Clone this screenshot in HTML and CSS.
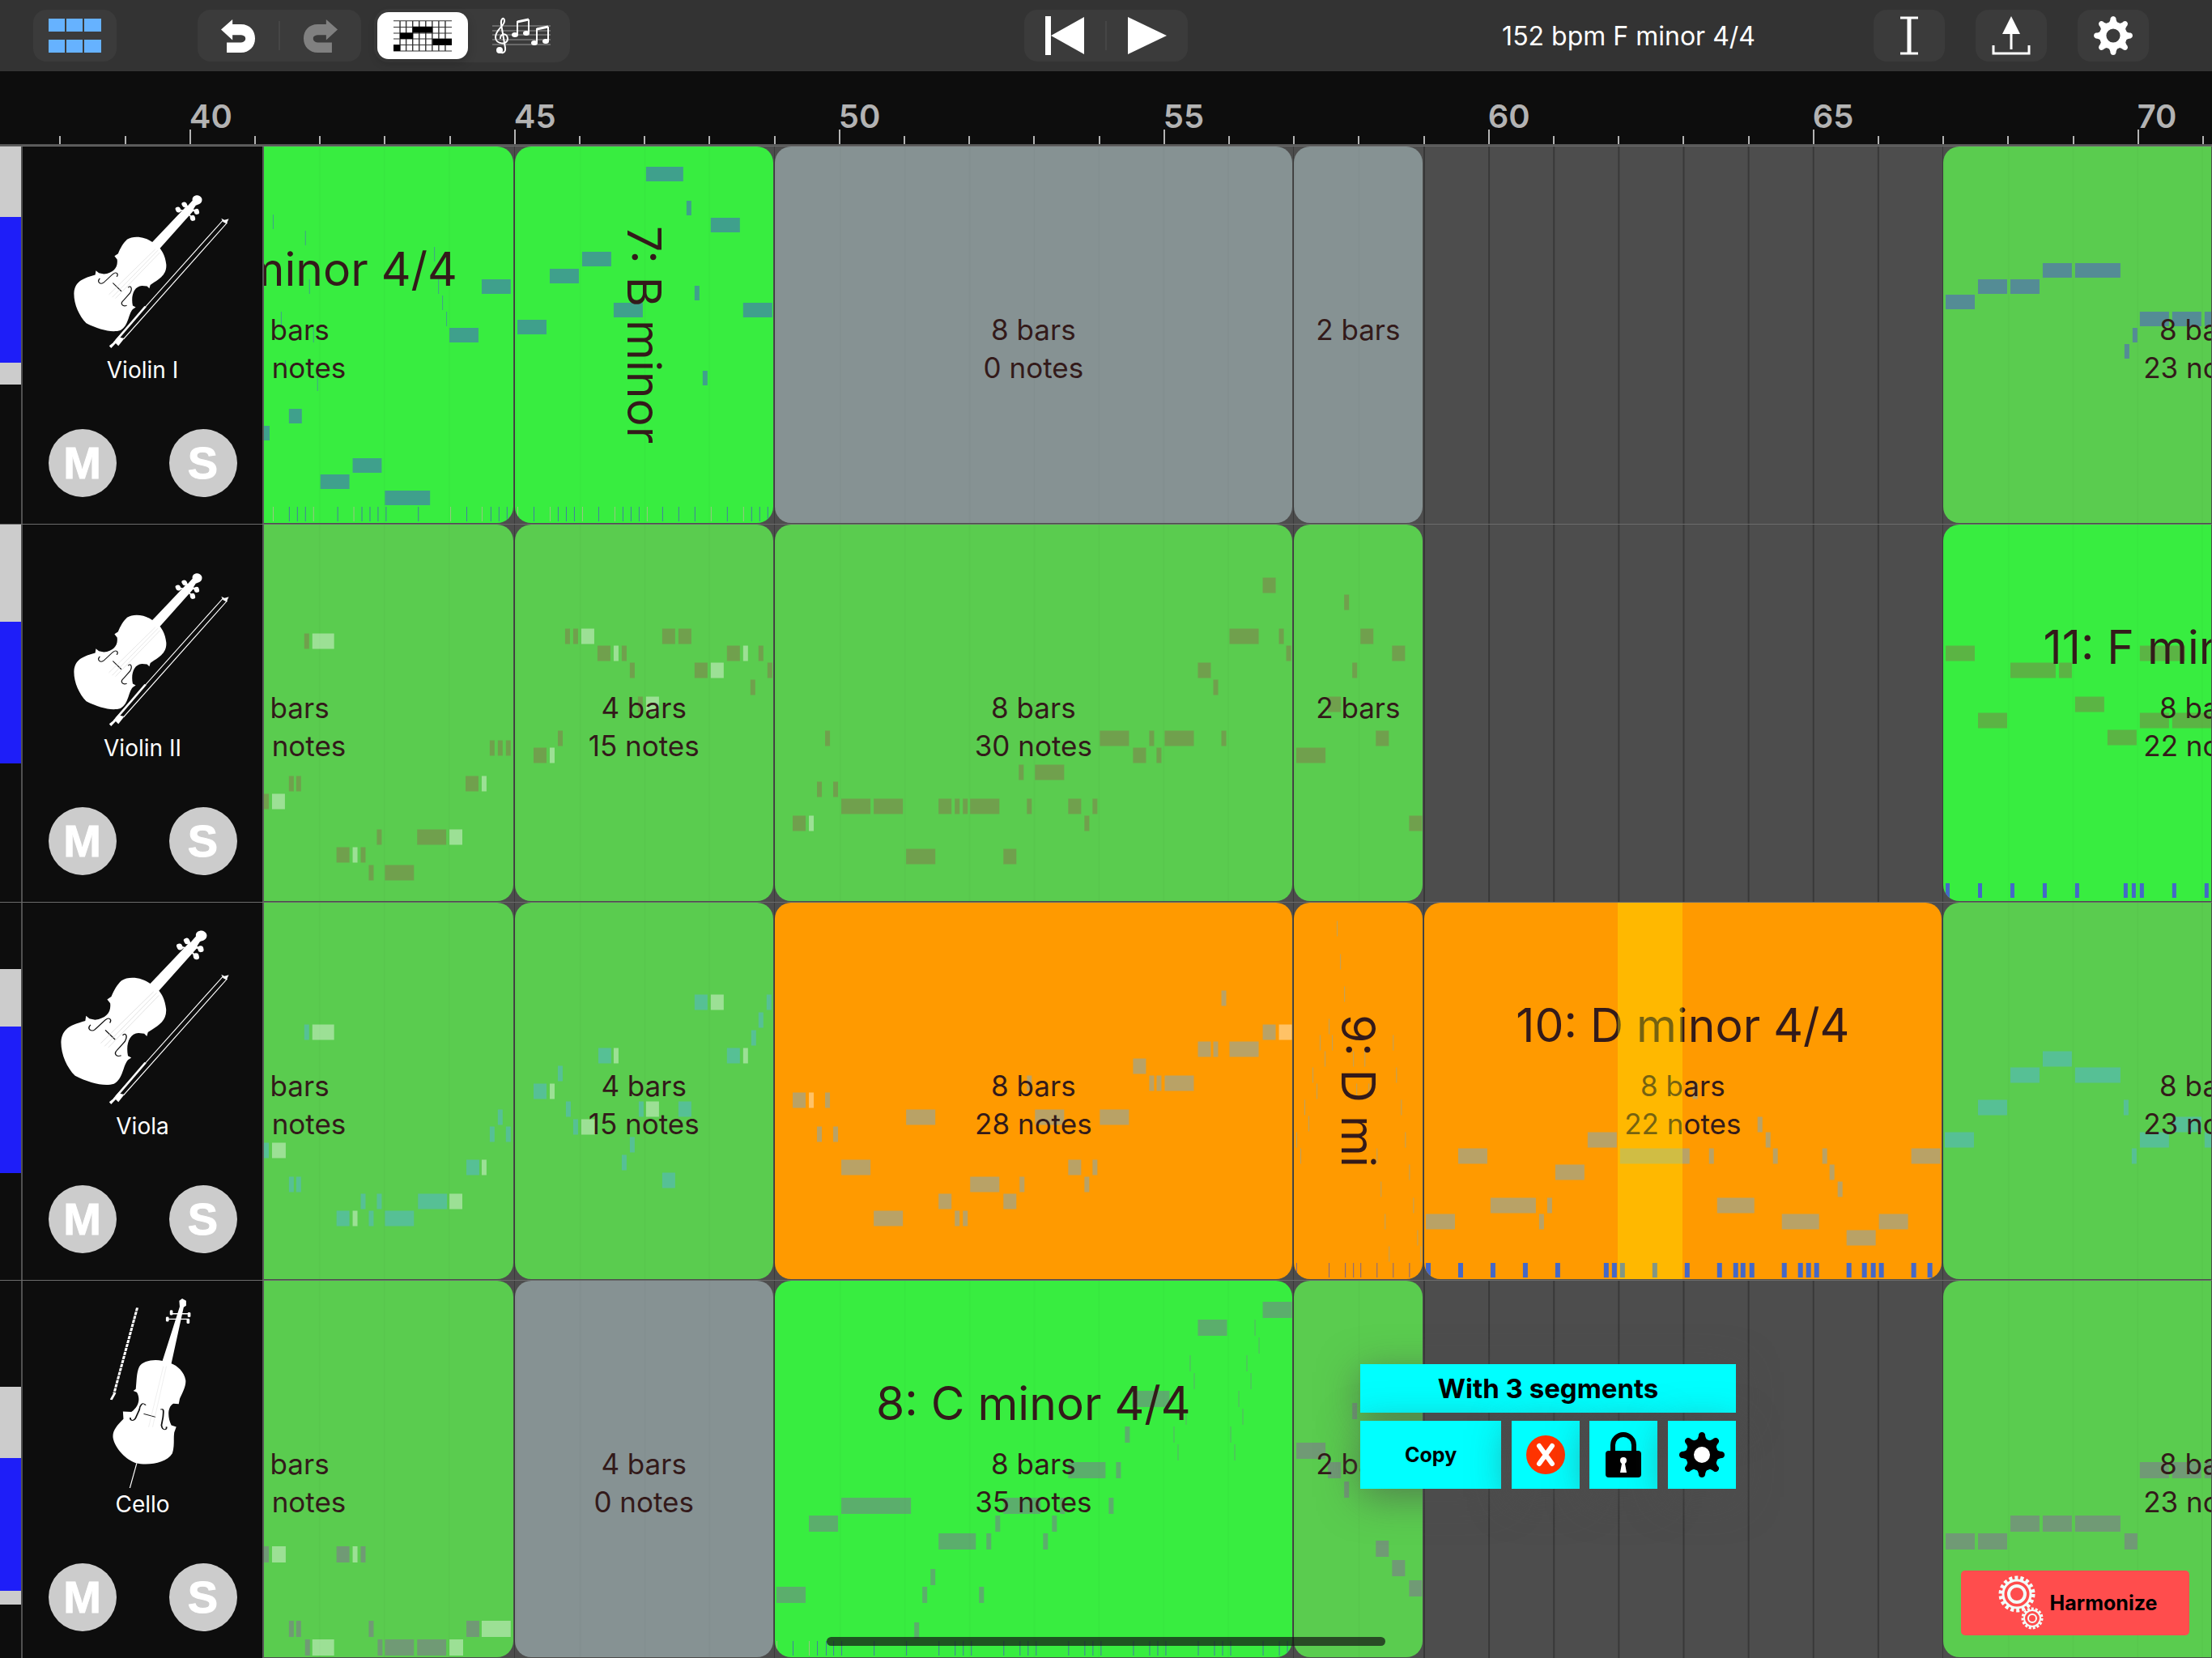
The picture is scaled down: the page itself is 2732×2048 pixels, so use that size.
FILE: index.html
```html
<!DOCTYPE html>
<html lang="en">
<head>
<meta charset="utf-8">
<title>Song arrangement</title>
<meta name="viewport" content="width=device-width, initial-scale=1">
<link rel="stylesheet" href="styles.css">
</head>
<body>
<svg class="defs" aria-hidden="true">
  <symbol id="fiddle" viewBox="224 208 388 506" preserveAspectRatio="none">
    <path fill="#fff" d="M461 382C440 362 405 356 385 372C374 384 364 405 358 424L347 433L355 446C358 475 345 495 315 500L300 496L291 487L289 503C255 515 228 525 225 570C224 610 240 655 262 682C300 706 340 718 365 708C390 690 388 650 402 630L411 623L402 617C396 580 405 545 430 543L445 545L452 553L455 540C480 520 505 505 503 465C500 430 490 415 484 405L588 262L566 246Z"/>
    <path fill="#fff" d="M566 250L582 228C580 216 588 209 597 209C608 211 614 222 609 234C604 243 596 243 592 246L582 266Z"/>
    <path stroke="#fff" stroke-width="5" fill="none" d="M556 243L580 262M540 262L574 272M592 268L566 258M582 292L560 268"/>
    <path stroke="#fff" stroke-width="15" stroke-linecap="round" d="M557 241l2 5M538 259l2 6M594 266l1 6M582 290l1 6"/>
    <path stroke="#111" stroke-width="3" fill="none" d="M303 516C292 530 306 540 314 532L342 500C352 490 360 498 354 510M384 616C372 622 364 610 372 600L394 570C402 552 396 540 388 550M342 533L368 564"/>
    <path stroke="#ddd" stroke-width="2" fill="none" d="M330 576L470 408M340 586L478 412M350 590L484 420"/>
  </symbol>
  <symbol id="bow" viewBox="328 292 366 482" preserveAspectRatio="none">
    <path stroke="#fff" stroke-width="3" fill="none" d="M350 744L676 300M374 740L688 310"/>
    <path stroke="#fff" stroke-width="7" fill="none" d="M345 755L440 620"/>
    <path fill="#fff" d="M670 294L680 300L693 296L686 314L676 308ZM330 766L346 750L362 734L376 738L358 766L350 756L336 774Z"/>
  </symbol>
  <symbol id="cello" viewBox="222 100 164 700" preserveAspectRatio="none">
    <path fill="#fff" d="M328 330C310 323 288 330 281 352C275 375 276 405 274 434L269 441L276 446C284 470 280 500 265 519L248 517L249 545C235 570 226 590 228 615C232 655 254 695 274 708C300 718 336 708 348 672C353 645 350 615 352 594L356 574L346 568C338 540 338 500 350 488L361 490L363 470C368 450 376 425 375 402C372 370 358 348 346 340L371 132L376 126V108L368 100L362 108L363 130Z"/>
    <path stroke="#fff" stroke-width="4" fill="none" d="M344 156H384M338 176H382"/>
    <path stroke="#fff" stroke-width="6" stroke-linecap="round" d="M346 146v12M338 170v12M382 154v12M380 178v12"/>
    <path stroke="#fff" stroke-width="2" fill="none" d="M276 708L262 800"/>
    <path stroke="#fff" stroke-width="5" stroke-dasharray="12 3" fill="none" d="M277 134L230 450"/>
    <path stroke="#fff" stroke-width="5" fill="none" d="M232 448L224 474"/>
    <path stroke="#111" stroke-width="3" fill="none" d="M294 494C288 480 282 495 281 512L274 540C270 555 262 552 263 540M324 510C332 504 330 520 329 540L326 568C328 590 338 586 336 574M290 526L314 538"/>
    <path stroke="#ddd" stroke-width="1" fill="none" d="M300 575L330 350M308 575L336 350"/>
  </symbol>
  <symbol id="cog" viewBox="-28 -28 56 56">
    <circle r="15" fill="none" stroke="currentColor" stroke-width="10"/>
    <g fill="currentColor">
      <path id="tooth" d="M-8 -16C-5 -20 -4 -22 -4 -25Q-3 -28 0 -28Q3 -28 4 -25C4 -22 5 -20 8 -16Z"/>
      <use href="#tooth" transform="rotate(45)"/><use href="#tooth" transform="rotate(90)"/><use href="#tooth" transform="rotate(135)"/>
      <use href="#tooth" transform="rotate(180)"/><use href="#tooth" transform="rotate(225)"/><use href="#tooth" transform="rotate(270)"/><use href="#tooth" transform="rotate(315)"/>
    </g>
  </symbol>
  <symbol id="undo" viewBox="578 70 89 122" preserveAspectRatio="none">
    <path fill="currentColor" d="M578 107L608 70V88H630C654 88 667 112 667 140C667 170 652 192 630 192H593V155H626C638 155 642 148 642 140C642 132 638 127 626 127H608V146Z"/>
  </symbol>
</svg>

<header class="toolbar">
  <div class="toolbar-left">
    <button class="tool grid-tool" aria-label="Tracks">
      <svg width="66" height="42" viewBox="0 0 66 42"><path fill="#66b2ff" d="M0 0h20v16H0zM22 0h20v16H22zM44 0h21v16H44zM0 26h20v16H0zM22 26h20v16H22zM44 26h21v16H44z"/></svg>
    </button>
    <div class="tool-group history">
      <button aria-label="Undo"><svg width="42" height="41"><use href="#undo"/></svg></button>
      <button aria-label="Redo" disabled><svg class="flip" width="42" height="41"><use href="#undo"/></svg></button>
    </div>
    <fieldset class="views">
      <label><input type="radio" name="view" aria-label="Piano roll" checked>
        <svg width="72" height="39" viewBox="1030 75 152 115" preserveAspectRatio="none"><path stroke="#333" stroke-width="3" fill="none" d="M1030 77h152M1030 100h152M1030 122h152M1030 143h152M1030 165h152M1030 187h152M1047 77v110M1063 77v110M1080 77v110M1097 77v110M1114 77v110M1131 77v110M1148 77v110M1165 77v110"/><path d="M1080 98h52v23h-52zM1047 121h34v22h-34zM1132 143h50v22h-50zM1030 165h17v22h-17z"/></svg>
      </label>
      <label><input type="radio" name="view" aria-label="Notation">
        <svg width="72" height="46" viewBox="0 0 72 46"><path stroke="#999" stroke-width="1" d="M0 11h72M0 17h72M0 22h72M0 28h72M0 34h72"/><g fill="none" stroke="#fff" stroke-width="2"><path d="M9 41C10 46 17 45 16 38L11 9C10 3 14 -1 15 4C16 11 4 15 4 25C4 34 19 35 19 27C19 19 9 20 10 27"/><path d="M31 22V5M45 20V3M55 31V14M69 30V12"/><path stroke-width="3" d="M31 6L45 3M55 15L69 12"/></g><g fill="#fff"><circle cx="9" cy="41" r="4"/><ellipse cx="28" cy="22" rx="4" ry="3"/><ellipse cx="42" cy="20" rx="4" ry="3"/><ellipse cx="52" cy="32" rx="4" ry="3"/><ellipse cx="66" cy="30" rx="4" ry="3"/></g></svg>
      </label>
    </fieldset>
  </div>
  <div class="tool-group transport">
    <button aria-label="Back to start"><svg width="48" height="48"><path fill="#fff" d="M0 0h7v48H0zM48 1v46L7 24z"/></svg></button>
    <button aria-label="Play"><svg width="48" height="48"><path fill="#fff" d="M0 1v46L48 24z"/></svg></button>
  </div>
  <div class="toolbar-right">
    <span class="song-info">152 bpm F minor 4/4</span>
    <button class="tool" aria-label="Caret"><svg width="24" height="48"><path stroke="#fff" stroke-width="3" d="M1 2h22M1 46h22"/><path stroke="#fff" stroke-width="5" d="M12 2v44"/></svg></button>
    <button class="tool" aria-label="Share"><svg width="48" height="48"><path fill="#fff" d="M24 0L35 22H13z"/><path fill="none" stroke="#fff" stroke-width="3" d="M24 20v21M2 36v10h44V36"/></svg></button>
    <button class="tool" aria-label="Settings"><svg width="48" height="48"><use href="#cog"/></svg></button>
  </div>
</header>

<div class="ruler">
  <ol class="bars">
    <li></li><li></li><li class="five">40</li><li></li><li></li><li></li><li></li><li class="five">45</li><li></li><li></li><li></li><li></li><li class="five">50</li><li></li><li></li><li></li><li></li><li class="five">55</li><li></li><li></li><li></li><li></li><li class="five">60</li><li></li><li></li><li></li><li></li><li class="five">65</li><li></li><li></li><li></li><li></li><li class="five">70</li><li></li>
  </ol>
</div>

<main class="tracks">
  <section class="track violin-one">
    <div class="meter"><i class="range" style="flex:87"></i><i class="level" style="flex:181"></i><i class="range" style="flex:27"></i><i style="flex:172"></i></div>
    <div class="instrument">
      <svg width="216" height="236"><use href="#fiddle" x="23" y="40" width="159" height="169"/><use href="#bow" x="66" y="68" width="149" height="161"/></svg>
      <h2>Violin I</h2>
      <div class="switches"><button aria-label="Mute">M</button><button aria-label="Solo">S</button></div>
    </div>
    <div class="lane">
      <div class="cell"><div class="segment head bright">
        <svg viewBox="326 181 309 465" preserveAspectRatio="none"><path class="note" d="M596 354h36M556 414h36M357 514h16M326 535h7M436 575h36M396 595h36M476 615h56"/><path class="note hair" d="M337 274h1M377 294h1M537 314h1M382 354h1M542 354h1M547 374h1M552 394h1M347 394h1M387 414h1M352 454h1M392 474h1"/><path class="tick soft" d="M337 635h1M387 635h1M437 635h1M557 635h1M596 635h1"/><path class="tick faint" d="M357 635h1M367 635h1M377 635h1M417 635h1M447 635h1M457 635h1M467 635h1M477 635h1M517 635h1M577 635h1M607 635h1M617 635h1M627 635h1"/></svg>
        <div class="label"><h3>6: Bb minor 4/4</h3><p>7 bars</p><p>22 notes</p></div></div></div>
      <div class="cell"><div class="segment four bright">
        <svg viewBox="636 181 319 465" preserveAspectRatio="none"><path class="note" d="M798 215h46M848 257h6M878 278h36M719 320h36M679 341h36M758 383h36M858 362h6M918 383h36M639 404h36M868 467h6"/><path class="tick soft" d="M639 635h1M679 635h1M719 635h1M759 635h1M799 635h1M878 635h1M918 635h1"/><path class="tick faint" d="M659 635h1M689 635h1M699 635h1M709 635h1M739 635h1M769 635h1M779 635h1M789 635h1M818 635h1M838 635h1M858 635h1M898 635h1M928 635h1M938 635h1M948 635h1"/></svg>
        <div class="label upright"><h3>7: B minor</h3></div></div></div>
      <div class="cell"><div class="segment eight empty"><div class="label"><p>8 bars</p><p>0 notes</p></div></div></div>
      <div class="cell"><div class="segment two empty"><div class="label"><p>2 bars</p></div></div></div>
      <div class="cell gap"></div>
      <div class="cell"><div class="segment tail mid">
        <svg viewBox="2400 181 331 465" preserveAspectRatio="none"><path class="note" d="M2403 373h36M2443 354h36M2483 354h36M2523 334h36M2563 334h56M2643 394h36M2683 394h36M2723 394h9M2624 434h6M2634 414h6"/></svg>
        <div class="label"><p>8 bars</p><p>23 notes</p></div></div></div>
    </div>
  </section>

  <section class="track violin-two">
    <div class="meter"><i class="range" style="flex:120"></i><i class="level" style="flex:176"></i><i style="flex:171"></i></div>
    <div class="instrument">
      <svg width="216" height="236"><use href="#fiddle" x="23" y="40" width="159" height="169"/><use href="#bow" x="66" y="68" width="149" height="161"/></svg>
      <h2>Violin II</h2>
      <div class="switches"><button aria-label="Mute">M</button><button aria-label="Solo">S</button></div>
    </div>
    <div class="lane">
      <div class="cell"><div class="segment head mid">
        <svg viewBox="326 648 309 465" preserveAspectRatio="none"><path class="note" d="M376 792h6M606 924h6M616 924h6M626 924h6M357 968h6M366 968h6M326 990h6M576 968h16M466 1034h6M516 1034h36M416 1056h16M446 1056h6M456 1078h6M476 1078h36"/><path class="rest" d="M386 792h27M336 990h16M596 968h6M556 1034h16M436 1056h6"/></svg>
        <div class="label"><p>7 bars</p><p>22 notes</p></div></div></div>
      <div class="cell"><div class="segment four mid">
        <svg viewBox="636 648 319 465" preserveAspectRatio="none"><path class="note" d="M698 786h6M708 786h6M818 786h16M838 786h16M738 807h16M768 807h6M898 807h16M937 807h6M778 828h6M858 828h16M948 828h6M927 849h6M788 870h6M689 912h6M659 933h16"/><path class="rest" d="M718 786h16M758 807h6M918 807h6M878 828h16M798 870h16M679 933h6"/></svg>
        <div class="label"><p>4 bars</p><p>15 notes</p></div></div></div>
      <div class="cell"><div class="segment eight mid">
        <svg viewBox="957 648 639 465" preserveAspectRatio="none"><path class="note" d="M1559 723h16M1518 786h36M1579 786h6M1588 807h6M1479 828h16M1498 849h6M1358 912h36M1419 912h6M1438 912h36M1508 912h6M1019 912h6M1399 933h16M1428 933h6M1258 954h6M1278 954h36M1009 975h6M1029 975h6M1039 996h36M1079 996h36M1159 996h16M1179 996h6M1189 996h6M1198 996h36M1268 996h6M1319 996h16M1349 996h6M979 1017h16M1339 1017h6M1119 1058h36M1239 1058h16"/><path class="rest" d="M999 1017h6"/></svg>
        <div class="label"><p>8 bars</p><p>30 notes</p></div></div></div>
      <div class="cell"><div class="segment two mid">
        <svg viewBox="1598 648 158 465" preserveAspectRatio="none"><path class="note" d="M1660 744h6M1680 786h16M1719 807h16M1670 828h6M1640 870h16M1699 912h16M1601 933h36M1740 1017h16"/></svg>
        <div class="label"><p>2 bars</p></div></div></div>
      <div class="cell gap"></div>
      <div class="cell"><div class="segment tail bright">
        <svg viewBox="2400 648 331 465" preserveAspectRatio="none"><path class="note" d="M2403 807h36M2483 828h56M2543 828h16M2563 870h36M2443 890h36M2603 911h36M2643 807h56M2643 890h36M2683 890h49"/><path class="tick" d="M2403 1100h5M2443 1100h5M2483 1100h5M2523 1100h5M2563 1100h5M2623 1100h5M2633 1100h5M2643 1100h5M2683 1100h5M2723 1100h5"/></svg>
        <div class="label"><h3>11: F minor 4/4</h3><p>8 bars</p><p>22 notes</p></div></div></div>
    </div>
  </section>

  <section class="track viola">
    <div class="meter"><i style="flex:82"></i><i class="range" style="flex:71"></i><i class="level" style="flex:182"></i><i style="flex:132"></i></div>
    <div class="instrument">
      <svg width="216" height="236"><use href="#fiddle" x="7" y="14" width="181" height="192"/><use href="#bow" x="66" y="68" width="149" height="161"/></svg>
      <h2>Viola</h2>
      <div class="switches"><button aria-label="Mute">M</button><button aria-label="Solo">S</button></div>
    </div>
    <div class="lane">
      <div class="cell"><div class="segment head mid">
        <svg viewBox="326 1115 309 465" preserveAspectRatio="none"><path class="note" d="M376 1275h6M616 1380h6M606 1401h6M626 1401h6M326 1421h6M577 1442h16M357 1463h6M366 1463h6M446 1484h6M466 1484h6M517 1484h36M416 1505h16M456 1505h6M476 1505h36"/><path class="rest" d="M386 1275h27M336 1421h17M596 1442h6M556 1484h16M436 1505h6"/></svg>
        <div class="label"><p>7 bars</p><p>22 notes</p></div></div></div>
      <div class="cell"><div class="segment four mid">
        <svg viewBox="636 1115 319 465" preserveAspectRatio="none"><path class="note" d="M858 1238h16M947 1238h6M937 1260h6M928 1282h6M739 1304h16M898 1304h16M689 1326h6M659 1348h16M699 1370h6M789 1370h6M838 1370h16M708 1392h6M778 1414h6M768 1436h6M818 1458h16"/><path class="rest" d="M878 1238h16M758 1304h6M918 1304h6M679 1348h6M798 1370h16M718 1392h17"/></svg>
        <div class="label"><p>4 bars</p><p>15 notes</p></div></div></div>
      <div class="cell"><div class="segment eight selected">
        <svg viewBox="957 1115 639 465" preserveAspectRatio="none"><path class="note" d="M1508 1233h6M1559 1275h16M1479 1296h16M1498 1296h6M1518 1296h36M1399 1317h16M1268 1338h6M1419 1338h6M1428 1338h6M1438 1338h36M979 1359h16M1019 1359h6M1119 1380h36M1278 1380h36M1358 1380h36M1009 1401h6M1029 1401h6M1039 1442h36M1319 1442h16M1349 1442h6M1198 1463h36M1259 1463h6M1339 1463h6M1159 1484h16M1239 1484h16M1079 1505h36M1179 1505h6M1189 1505h6"/><path class="rest" d="M1579 1275h16M999 1359h6"/></svg>
        <div class="label"><p>8 bars</p><p>28 notes</p></div></div></div>
      <div class="cell"><div class="segment two selected">
        <svg viewBox="1598 1115 158 465" preserveAspectRatio="none"><path class="note hair" d="M1651 1147h1M1655 1188h1M1660 1228h1M1641 1268h1M1630 1288h1M1645 1288h1M1720 1288h1M1636 1308h1M1671 1308h1M1685 1308h1M1621 1328h1M1724 1328h1M1626 1348h1M1675 1348h1M1690 1348h1M1611 1368h1M1730 1368h1M1616 1388h1M1601 1408h1M1735 1408h1M1606 1428h1M1700 1428h1M1740 1448h1M1705 1469h1M1745 1489h1M1710 1509h1M1750 1529h1M1715 1549h1M1754 1549h1"/><path class="tick faint" d="M1601 1569h1M1641 1569h1M1661 1569h1M1671 1569h1M1680 1569h1M1700 1569h1M1720 1569h1M1740 1569h1"/></svg>
        <div class="label upright"><h3>9: D mi</h3></div></div></div>
      <div class="cell"><div class="segment eight selected">
        <svg viewBox="1759 1115 640 465" preserveAspectRatio="none"><path class="note" d="M2091 1348h6M2171 1389h6M1961 1408h36M2181 1408h6M1801 1428h36M2001 1428h86M2111 1428h6M2190 1428h6M2251 1428h6M2361 1428h36M1921 1448h36M2260 1448h6M2270 1469h6M1841 1489h56M1911 1489h6M2121 1489h46M1761 1509h36M1901 1509h6M2201 1509h46M2321 1509h36M2281 1529h36"/><path class="tick" d="M1761 1569h6M1801 1569h6M1841 1569h6M1881 1569h6M1921 1569h6M1981 1569h6M1991 1569h6M2001 1569h6M2041 1569h6M2081 1569h6M2121 1569h6M2141 1569h6M2150 1569h6M2161 1569h6M2201 1569h6M2221 1569h6M2231 1569h6M2241 1569h6M2281 1569h6M2300 1569h6M2311 1569h6M2321 1569h6M2361 1569h6M2381 1569h6"/></svg>
        <div class="label"><h3>10: D minor 4/4</h3><p>8 bars</p><p>22 notes</p></div>
        <div class="cursor"></div></div></div>
      <div class="cell"><div class="segment tail mid">
        <svg viewBox="2400 1115 331 465" preserveAspectRatio="none"><path class="note" d="M2402 1408h36M2443 1368h36M2483 1328h36M2523 1308h36M2563 1328h56M2623 1368h6M2633 1428h6M2643 1408h36M2683 1389h36M2723 1408h9"/></svg>
        <div class="label"><p>8 bars</p><p>23 notes</p></div></div></div>
    </div>
  </section>

  <section class="track cello">
    <div class="meter"><i style="flex:131"></i><i class="range" style="flex:88"></i><i class="level" style="flex:165"></i><i class="range" style="flex:17"></i><i style="flex:66"></i></div>
    <div class="instrument">
      <svg width="216" height="236"><use href="#cello" x="68" y="2" width="100" height="234"/></svg>
      <h2>Cello</h2>
      <div class="switches"><button aria-label="Mute">M</button><button aria-label="Solo">S</button></div>
    </div>
    <div class="lane">
      <div class="cell"><div class="segment head mid">
        <svg viewBox="326 1582 309 465" preserveAspectRatio="none"><path class="note" d="M326 1920h6M416 1920h16M446 1920h6M357 2012h6M366 2012h6M456 2012h6M577 2012h16M377 2035h6M467 2035h6M476 2035h36M516 2035h36"/><path class="rest" d="M336 1920h17M436 1920h6M596 2012h36M386 2035h27M556 2035h17"/></svg>
        <div class="label"><p>7 bars</p><p>22 notes</p></div></div></div>
      <div class="cell"><div class="segment four empty"><div class="label"><p>4 bars</p><p>0 notes</p></div></div></div>
      <div class="cell"><div class="segment eight bright">
        <svg viewBox="957 1582 639 465" preserveAspectRatio="none"><path class="note" d="M1559 1618h36M1479 1640h36M1398 1728h46M1389 1772h6M1319 1816h46M1378 1816h6M1039 1860h86M1239 1860h46M1309 1860h6M1369 1860h6M999 1882h36M1229 1882h6M1299 1882h6M1159 1904h46M1218 1904h6M1288 1904h6M1149 1948h6M959 1970h36M1139 1970h6M1209 1970h6M1129 2014h6"/><path class="note hair" d="M1549 1640h1M1554 1662h1M1469 1684h1M1539 1684h1M1474 1706h1M1544 1706h1M1529 1728h1M1464 1750h1M1534 1750h1M1449 1772h1M1519 1772h1M1454 1794h1M1524 1794h1"/><path class="tick soft" d="M959 2036h1M999 2036h1"/><path class="tick faint" d="M979 2036h1M1009 2036h1M1020 2036h1M1029 2036h1M1039 2036h1M1079 2036h1M1119 2036h1M1159 2036h1M1179 2036h1M1189 2036h1M1199 2036h1M1239 2036h1M1259 2036h1M1269 2036h1M1279 2036h1M1319 2036h1M1339 2036h1M1349 2036h1M1359 2036h1M1399 2036h1M1419 2036h1M1429 2036h1M1439 2036h1M1479 2036h1M1499 2036h1M1509 2036h1M1519 2036h1M1559 2036h1M1579 2036h1M1589 2036h1"/></svg>
        <div class="label"><h3>8: C minor 4/4</h3><p>8 bars</p><p>35 notes</p></div></div></div>
      <div class="cell"><div class="segment two mid">
        <svg viewBox="1598 1582 158 465" preserveAspectRatio="none"><path class="note" d="M1670 1743h6M1601 1792h36M1640 1816h16M1660 1840h6M1699 1913h16M1719 1937h16M1740 1962h16"/></svg>
        <div class="label"><p>2 bars</p></div></div></div>
      <div class="cell gap"></div>
      <div class="cell"><div class="segment tail mid">
        <svg viewBox="2400 1582 331 465" preserveAspectRatio="none"><path class="note" d="M2403 1904h36M2443 1904h36M2483 1882h36M2523 1882h36M2563 1882h56M2624 1904h16M2643 1816h36M2683 1816h36M2723 1816h9"/></svg>
        <div class="label"><p>8 bars</p><p>23 notes</p></div></div></div>
      <div class="popup" role="dialog" aria-label="With 3 segments">
        <h2>With 3 segments</h2>
        <button>Copy</button>
        <button aria-label="Delete"><svg width="48" height="48"><circle cx="24" cy="24" r="24" fill="#ff3300"/><path stroke="#fff" stroke-width="6" stroke-linecap="round" d="M16 13L32 35M32 13L16 35"/></svg></button>
        <button aria-label="Lock"><svg width="44" height="56"><path fill="none" stroke="#000" stroke-width="6" d="M9 26V16a13 13 0 0 1 26 0v10"/><rect y="23" width="44" height="33" rx="4"/><path fill="#fff" d="M18 35a4 4 0 1 1 8 0c0 2-1 3-2 4l2 11h-8l2-11c-1-1-2-2-2-4z"/></svg></button>
        <button aria-label="Segment settings"><svg width="56" height="56"><circle cx="28" cy="28" r="11" fill="#fff"/><use href="#cog"/></svg></button>
      </div>
    </div>
  </section>
</main>

<button class="harmonize">
  <svg width="56" height="68" viewBox="0 0 56 68" fill="none" stroke="#f2fffa"><circle cx="23" cy="23" r="20" stroke-width="5" stroke-dasharray="4 3"/><circle cx="23" cy="23" r="17" stroke-width="3"/><circle cx="23" cy="23" r="10" stroke-width="4"/><circle cx="42" cy="53" r="12" stroke-width="3" stroke-dasharray="3 2"/><circle cx="42" cy="53" r="10" stroke-width="2"/><circle cx="42" cy="53" r="5" stroke-width="2"/></svg>
  Harmonize
</button>
<div class="home-indicator"></div>
</body>
</html>
```
FILE: styles.css
```css
* { box-sizing: border-box; }

html, body { height: 100%; }

body {
  margin: 0;
  display: flex;
  flex-direction: column;
  position: relative;
  overflow: hidden;
  background: #0d0d0d;
  color: #fff;
  font-family: Inter, "Liberation Sans", sans-serif;
}

h2, h3, p { margin: 0; font-weight: 400; }
button { border: 0; padding: 0; margin: 0; color: inherit; font: inherit; }
svg { display: block; }
.defs { position: absolute; width: 0; height: 0; }

/* Toolbar */
.toolbar {
  flex: none;
  height: 88px;
  padding: 0 78px 0 41px;
  display: flex;
  align-items: center;
  background: #333;
}
.toolbar-left, .toolbar-right { flex: 1 1 0; display: flex; align-items: center; }
.toolbar-left { margin-right: 37px; }
.toolbar-right { justify-content: flex-end; gap: 38px; }

.tool, .tool-group { height: 64px; border-radius: 16px; background: #3b3b3b; }
.tool { width: 88px; display: grid; place-items: center; }
.grid-tool { width: 103px; }
.tool-group { width: 202px; display: flex; align-items: center; }
.tool-group button { flex: 1; height: 36px; display: grid; place-items: center; background: none; }
.tool-group button + button { border-left: 2px solid #464646; }
.transport { padding-bottom: 0; }
.transport svg { margin: -6px 0; }
.history { margin-left: 100px; }
.history svg { margin: -3px 0; }
.history button:disabled { color: #808080; }
.flip { transform: scaleX(-1); }

.views {
  margin: 0 0 0 16px;
  padding: 4px;
  border: 0;
  width: 242px;
  height: 66px;
  display: flex;
  border-radius: 18px;
  background: #3b3b3b;
}
.views label { flex: 0 0 112px; display: grid; place-items: center; border-radius: 14px; }
.views label + label { flex: 1; padding-left: 10px; }
.views label:has(:checked) { background: #fff; box-shadow: 0 4px 12px rgba(0, 0, 0, .2); }
.views input { appearance: none; position: absolute; margin: 0; }

.song-info { font-size: 32px; margin-right: 108px; white-space: nowrap; }

/* Ruler: one list item per bar, 30 bars across the lanes */
.ruler {
  flex: none;
  height: 92px;
  padding-left: 326px;
  border-bottom: 2px solid #555;
  overflow: hidden;
}
.bars {
  list-style: none;
  margin: 0 0 0 -10.5%;
  padding: 0;
  width: 113.33%;
  height: 100%;
  display: grid;
  grid-template-columns: repeat(34, minmax(0, 1fr));
}
.bars li {
  display: flex;
  flex-direction: column;
  justify-content: flex-end;
  font-size: 40px;
  line-height: 48px;
  font-weight: 600;
  color: #b3b3b3;
}
.bars li::after { content: ""; width: 2px; height: 10px; margin-top: 2px; background: #b3b3b3; }
.bars .five::after { height: 18px; margin-top: -8px; }

/* Tracks */
.tracks { flex: 1; display: flex; flex-direction: column; min-height: 0; }
.track {
  flex: 1 1 0;
  min-height: 0;
  display: grid;
  grid-template-columns: 28px 298px minmax(0, 1fr);
  border-top: 1px solid #6b6b6b;
}
.meter { display: flex; flex-direction: column; border-right: 2px solid #505050; }
.meter .range { background: #ccc; }
.meter .level { background: #1e1ef8; }

.instrument {
  display: flex;
  flex-direction: column;
  align-items: center;
  padding-top: 20px;
  border-right: 2px solid #555;
}
.instrument h2 { font-size: 28px; line-height: 40px; }
.switches { display: flex; gap: 65px; margin-top: 53px; }
.switches button {
  width: 84px;
  height: 84px;
  border-radius: 50%;
  background: #ccc;
  color: #fff;
  font: 700 56px/84px "Liberation Sans", sans-serif;
  -webkit-text-stroke: 1px #fff;
}

.lane {
  position: relative;
  display: grid;
  grid-template-columns: minmax(0, 385fr) minmax(0, 400fr) minmax(0, 800fr) minmax(0, 200fr) minmax(0, 800fr) minmax(0, 415fr);
  background: #4d4d4d;
}
.cell { padding: 0 1px 1px 0; border-left: 1px solid #3a3a3a; overflow: hidden; }
.cell:first-child { border-left: 0; }
.gap {
  border-left: 0;
  background: linear-gradient(to right, #383838 2px, transparent 2px) 0 0 / 12.5% 100%;
}

.segment {
  --bars: 8;
  position: relative;
  height: 100%;
  overflow: hidden;
  border-radius: 20px;
  color: #331a1a;
  background: linear-gradient(to right, rgba(0, 0, 0, .02) 2px, transparent 2px) 0 0 / calc(100% / var(--bars)) 100%;
}
.two { --bars: 2; }
.four { --bars: 4; }
.head { --bars: 3.85; border-radius: 0 20px 20px 0; background-position: 100% 0; }
.tail { --bars: 4.15; border-radius: 20px 0 0 20px; }
.bright { background-color: #38ed40; }
.mid { background-color: #5acc4f; }
.empty { background-color: #869293; }
.selected { background-image: none; background-color: #ff9a00; }

.segment > svg { position: absolute; inset: 0; width: 100%; height: 100%; fill: none; stroke-width: 19; }
.violin-one .segment > svg { stroke-width: 18; }
.violin-one .note { stroke: rgba(76, 44, 254, .4); }
.violin-two .note { stroke: rgba(145, 94, 74, .4); }
.viola .note { stroke: rgba(80, 176, 255, .4); }
.cello .note { stroke: rgba(145, 79, 176, .4); }
.cello .segment > svg { stroke-width: 20; }
.rest { stroke: rgba(255, 255, 255, .4); }
.tick { stroke: #4468c8; stroke-width: 18; }
.tick.faint { stroke: rgba(68, 80, 200, .7); }
.tick.soft { stroke: rgba(255, 160, 200, .5); }

.label { position: relative; padding-top: 203px; text-align: center; font-size: 35px; line-height: 47px; white-space: nowrap; }
.label:has(h3) { padding-top: 116px; }
.label h3 { font-size: 57px; line-height: 72px; margin-bottom: 15px; }
.head .label { width: 181%; margin-left: -81%; }
.tail .label { width: 193%; }
.label.upright { height: 100%; padding: 0; display: grid; place-items: center; }
.upright h3 { writing-mode: vertical-rl; margin: 0; }

.cursor { position: absolute; top: 0; bottom: 0; left: 37.5%; width: 12.5%; background: rgba(255, 247, 0, .33); }

/* Selection popup */
.popup {
  position: absolute;
  left: 56.28%;
  top: 103px;
  width: 464px;
  display: grid;
  grid-template-columns: 174px 84px 84px 84px;
  grid-template-rows: 60px 84px;
  row-gap: 10px;
  justify-content: space-between;
  color: #000;
}
.popup > * { background: #0ff; display: grid; place-items: center; box-shadow: 0 10px 50px rgba(77, 77, 77, .6); }
.popup h2 { grid-column: 1 / -1; font-size: 33px; font-weight: 700; }
.popup button { font-size: 25px; font-weight: 700; }

.harmonize {
  position: absolute;
  right: 28px;
  bottom: 28px;
  width: 282px;
  height: 80px;
  padding-left: 6px;
  display: flex;
  align-items: center;
  justify-content: center;
  gap: 8px;
  border-radius: 5px;
  background: #ff4d4d;
  color: #000;
  font-size: 25px;
  font-weight: 700;
}

.home-indicator {
  position: absolute;
  left: 50%;
  bottom: 15px;
  width: 690px;
  height: 11px;
  margin-left: -345px;
  border-radius: 6px;
  background: rgba(20, 20, 20, .7);
}
```
